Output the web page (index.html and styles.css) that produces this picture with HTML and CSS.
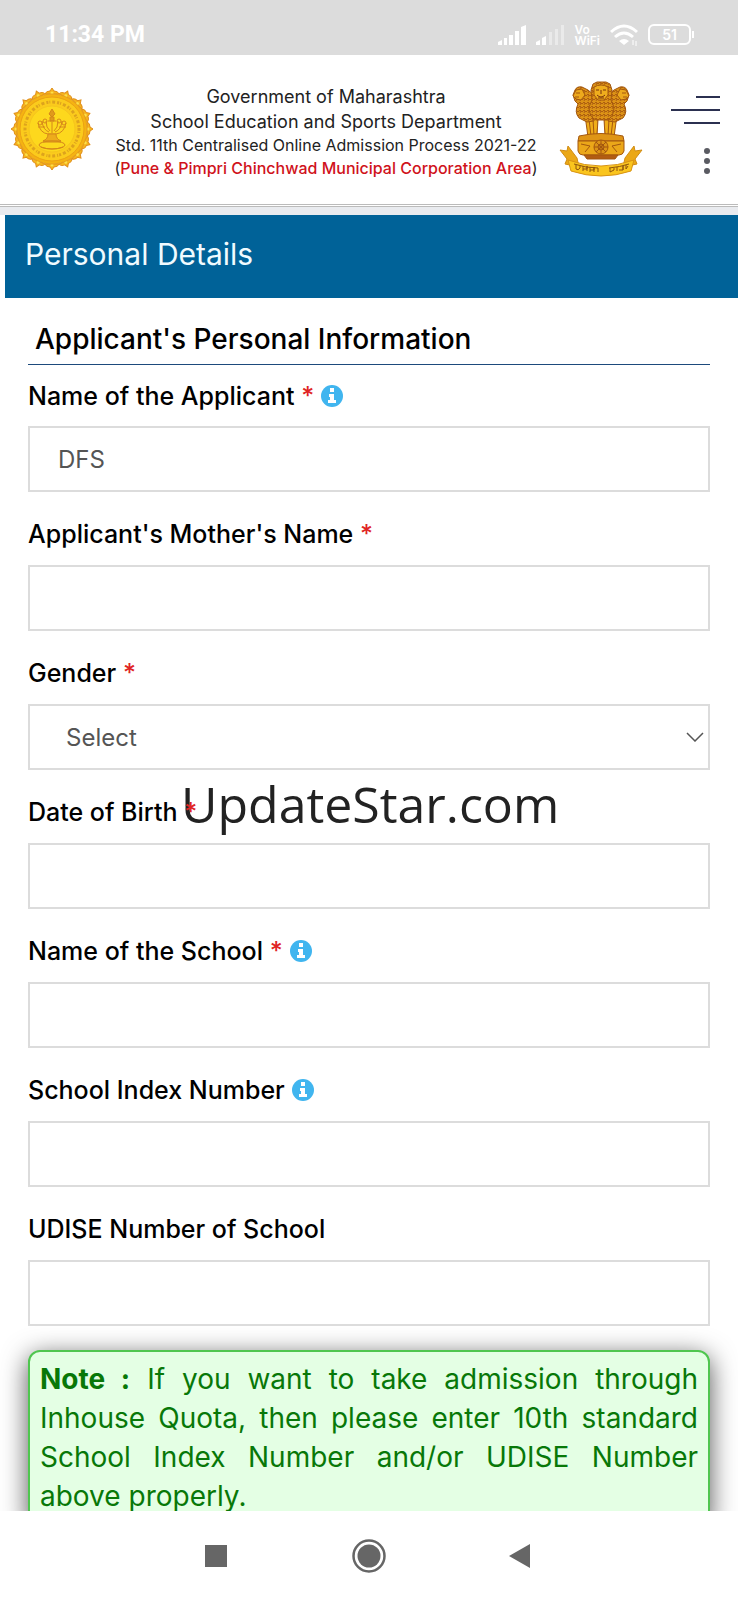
FILE: index.html
```html
<!DOCTYPE html>
<html lang="en">
<head>
    <meta charset="UTF-8">
    <meta name="viewport" content="width=device-width, initial-scale=1.0">
    <title>Personal Details</title>
    <link rel="stylesheet" href="styles.css">
</head>
<body>
    <!-- Status bar -->
    <div class="status-bar">
        <span class="clock">11:34 PM</span>
        <div class="status-icons">
            <svg width="28" height="20" viewBox="0 0 28 20" fill="#fff">
                <path d="M0 20v-3l4-2v5zM6 13h3v7H6zM11 10h4v10h-4zM17 6h4v14h-4zM23 2l5-2v20h-5z"/>
            </svg>
            <svg width="28" height="20" viewBox="0 0 28 20" fill="#fff">
                <path d="M0 20v-3l4-2v5zM6 13l4-2v9H6z"/>
                <path opacity=".4" d="M13 7h3v13h-3zM19 4h3v16h-3zM25 0h3v20h-3z"/>
            </svg>
            <span class="vowifi"><span>Vo</span><span>WiFi</span></span>
            <svg width="28" height="22" viewBox="0 0 28 22" fill="none" stroke="#fff" stroke-width="3">
                <path d="M1 8Q14-4 27 8M5 13q9-8 18 0"/>
                <path d="M9 17q5-4 10 0l-5 4z" fill="#fff" stroke="none"/>
                <path d="M23 16v5M26 17v5" stroke-width="1"/>
            </svg>
            <span class="battery">51</span>
        </div>
    </div>

    <!-- Header -->
    <header class="site-header">
        <svg class="seal" width="82" height="84" viewBox="-41 -42 82 84">
            <defs>
                <g id="petal">
                    <path d="M-7-35Q-6-38-2-38L0-41l2 3q4 0 5 3z" fill="#f6b51d" stroke="#e08f1c"/>
                    <circle cy="-36" r="1.5" fill="#fbe04a"/>
                </g>
                <g id="petals">
                    <use href="#petal"/>
                    <use href="#petal" transform="rotate(22.5)"/>
                    <use href="#petal" transform="rotate(45)"/>
                    <use href="#petal" transform="rotate(67.5)"/>
                </g>
            </defs>
            <use href="#petals"/>
            <use href="#petals" transform="rotate(90)"/>
            <use href="#petals" transform="rotate(180)"/>
            <use href="#petals" transform="rotate(270)"/>
            <circle r="35" fill="#f5b312" stroke="#e9a01a"/>
            <circle r="32" fill="#fbcb1c" stroke="#eba115"/>
            <circle r="27" fill="none" stroke="#dda31d" stroke-width="3" stroke-dasharray="2 1 1 2 3 2"/>
            <circle r="23" fill="#fdd81d" stroke="#f5c51c"/>
            <g fill="none" stroke="#d5861a">
                <path d="M0-20l3 5-3 3-3-3zM-2-12h4v4h-4zM-4-8h8" fill="#e09a1b"/>
                <path d="M-14-6q2 10 10 11h8q8-1 10-11M-10-8q1 9 7 11M10-8Q9 1 3 3M0-7v11M-6-8q0 7 4 10M6-8q0 7-4 10M-14-2h7M7-2h7"/>
                <circle cx="-12" cy="-6" r="2"/><circle cx="12" cy="-6" r="2"/>
                <circle cx="-7" cy="-8" r="2"/><circle cx="7" cy="-8" r="2"/>
                <path d="M-4 5q0 5-5 7h18q-5-2-5-7z" fill="#edac1b"/>
                <ellipse cy="16" rx="13" ry="4"/>
                <path d="M-9 13H9M-11 18q11 4 22 0"/>
            </g>
        </svg>

        <div class="header-text">
            <p>Government of Maharashtra</p>
            <p>School Education and Sports Department</p>
            <p class="small">Std. 11th Centralised Online Admission Process 2021-22</p>
            <p class="small">(<span class="area">Pune &amp; Pimpri Chinchwad Municipal Corporation Area</span>)</p>
        </div>

        <svg class="emblem" width="84" height="96" viewBox="0 0 84 96">
            <defs>
                <pattern id="mane" width="4" height="4" patternUnits="userSpaceOnUse">
                    <rect width="4" height="4" fill="#dc9216"/>
                    <path d="M0 2q1-2 2 0t2 0M1 4l1-2" fill="none" stroke="#ad5f10"/>
                </pattern>
            </defs>
            <g stroke="#a3570e" stroke-linejoin="round">
                <!-- legs -->
                <path d="M26 34l3 22h9l1-18h6l1 18h9l3-22z" fill="#f0ad19"/>
                <path d="M39 38h6l1 17h-8z" fill="#fff"/>
                <path d="M30 38l2 17M34 38l1 17M50 38l-1 17M54 38l-2 17M27 55h11M46 55h11" fill="none"/>
                <!-- side lions -->
                <path d="M23 6q-5-1-7 3l-2 5 2 6 3 3q-4 8 1 14l8 4 7-1V14l-6-5z" fill="url(#mane)"/>
                <path d="M61 6q5-1 7 3l2 5-2 6-3 3q4 8-1 14l-8 4-7-1V14l6-5z" fill="url(#mane)"/>
                <path d="M17 9l6-1 3 6-4 5-5-1-3-3zM67 9l-6-1-3 6 4 5 5-1 3-3z" fill="#eda91c"/>
                <path d="M17 12h4M16 16h4M67 12h-4M68 16h-4" fill="none"/>
                <!-- front lion -->
                <path d="M34 3l4-2h9l4 2 2 6-1 10 3 7q0 10-7 13H37q-7-3-7-13l3-7-1-10z" fill="url(#mane)"/>
                <path d="M35 6q7-4 14 0v8l-4 5h-6l-4-5z" fill="#efad1d"/>
                <path d="M37 9h3M44 9h3M42 9v4M38 14q4 4 8 0M39 17h6" fill="none" stroke="#79330c"/>
                <!-- abacus -->
                <path d="M20 55q22-5 44 0l1 5H19z" fill="#df9516"/>
                <path d="M19 60h46v10q-1 4-5 4H24q-4 0-5-4z" fill="#eba719"/>
                <circle cx="42" cy="66" r="7" fill="#dc9317"/>
                <circle cx="42" cy="66" r="3" fill="none"/>
                <path d="M42 59v14M35 66h14M37 61l10 10M47 61L37 71M22 63l9 2-5 6M62 63l-9 2 5 6" fill="none"/>
                <path d="M25 74h34l-3 4H28z" fill="#b25c12"/>
            </g>
            <!-- ribbon -->
            <path d="M1 69l7 1 1-5 9 12 2 9-14-3 2-5zM83 69l-7 1-1-5-9 12-2 9 14-3-2-5z" fill="#eba817" stroke="#d18c12"/>
            <path d="M9 79q33 12 66 0l-3 11q-30 10-60 0z" fill="#fac51e" stroke="#d89314"/>
            <path d="M15 83q12 4 24 4M50 87q11-1 20-4" fill="none" stroke="#8e530d"/>
            <path d="M17 84v4q2 2 4-1v-2M24 85v5M24 88h4v-3v5M31 86v5M31 89h4v-3v5M39 87v4M51 87v4l4-2v-2M58 86v4M60 89h4v-4v4M67 84v4l2-3" fill="none" stroke="#8e530d"/>
        </svg>

        <div class="header-actions">
            <button type="button" class="menu-btn" aria-label="Open menu">
                <span></span><span></span><span></span>
            </button>
            <button type="button" class="more-btn" aria-label="More options">
                <span></span><span></span><span></span>
            </button>
        </div>
    </header>

    <main>
        <h1>Personal Details</h1>

        <form class="details-form">
            <h2>Applicant's Personal Information</h2>

            <div class="field">
                <div class="field-label">
                    <label for="applicantName">Name of the Applicant <span class="required">*</span></label>
                    <svg class="info" width="22" height="22" viewBox="0 0 22 22">
                        <circle cx="11" cy="11" r="11" fill="#40b5ef"/>
                        <path d="M9 3h4v4H9zM8 9h5v6h2v3H7v-3h2v-3H8z" fill="#fff"/>
                    </svg>
                </div>
                <input type="text" id="applicantName" value="DFS">
            </div>

            <div class="field">
                <div class="field-label">
                    <label for="motherName">Applicant's Mother's Name <span class="required">*</span></label>
                </div>
                <input type="text" id="motherName">
            </div>

            <div class="field">
                <div class="field-label">
                    <label for="gender">Gender <span class="required">*</span></label>
                </div>
                <div class="select-wrap">
                    <select id="gender">
                        <option>Select</option>
                        <option>Male</option>
                        <option>Female</option>
                        <option>Transgender</option>
                    </select>
                    <svg class="chevron" width="18" height="10" viewBox="0 0 18 10" fill="none" stroke="#555" stroke-width="1.5">
                        <path d="M1 1l8 8 8-8"/>
                    </svg>
                </div>
            </div>

            <div class="field">
                <div class="watermark">UpdateStar.com</div>
                <div class="field-label">
                    <label for="birthDate">Date of Birth <span class="required">*</span></label>
                </div>
                <input type="text" id="birthDate">
            </div>

            <div class="field">
                <div class="field-label">
                    <label for="schoolName">Name of the School <span class="required">*</span></label>
                    <svg class="info" width="22" height="22" viewBox="0 0 22 22">
                        <circle cx="11" cy="11" r="11" fill="#40b5ef"/>
                        <path d="M9 3h4v4H9zM8 9h5v6h2v3H7v-3h2v-3H8z" fill="#fff"/>
                    </svg>
                </div>
                <input type="text" id="schoolName">
            </div>

            <div class="field">
                <div class="field-label">
                    <label for="schoolIndex">School Index Number</label>
                    <svg class="info" width="22" height="22" viewBox="0 0 22 22">
                        <circle cx="11" cy="11" r="11" fill="#40b5ef"/>
                        <path d="M9 3h4v4H9zM8 9h5v6h2v3H7v-3h2v-3H8z" fill="#fff"/>
                    </svg>
                </div>
                <input type="text" id="schoolIndex">
            </div>

            <div class="field">
                <div class="field-label">
                    <label for="udise">UDISE Number of School</label>
                </div>
                <input type="text" id="udise">
            </div>

            <p class="note"><b>Note :</b> If you want to take admission through Inhouse Quota, then please enter 10th standard School Index Number and/or UDISE Number above properly.</p>
        </form>
    </main>

    <!-- Phone navigation -->
    <nav class="phone-nav">
        <button type="button" aria-label="Recent apps">
            <svg width="34" height="34" viewBox="0 0 34 34" fill="#666"><path d="M6 6h22v22H6z"/></svg>
        </button>
        <button type="button" aria-label="Home">
            <svg width="34" height="34" viewBox="0 0 34 34" fill="#666">
                <circle cx="17" cy="17" r="15.5" fill="none" stroke="#666" stroke-width="2.5"/>
                <circle cx="17" cy="17" r="11.5"/>
            </svg>
        </button>
        <button type="button" aria-label="Back">
            <svg width="34" height="34" viewBox="0 0 34 34" fill="#666"><path d="M4 17L25 5v24z"/></svg>
        </button>
    </nav>
</body>
</html>
```
FILE: styles.css
```css
* {
    box-sizing: border-box;
}
body {
    margin: 0;
    height: 100vh;
    display: flex;
    flex-direction: column;
    font-family: Inter, "Open Sans", sans-serif;
    background-color: #fff;
    color: #000;
}
button {
    padding: 0;
    border: none;
    background: none;
    cursor: pointer;
}
svg {
    display: block;
}

/* Status bar */
.status-bar {
    flex: none;
    display: flex;
    justify-content: space-between;
    align-items: center;
    height: 55px;
    padding: 14px 47px 0 45px;
    background-color: #dcdcdc;
    color: #fff;
}
.clock {
    font-family: Roboto, sans-serif;
    font-size: 23px;
    font-weight: 700;
}
.status-icons {
    display: flex;
    align-items: center;
    gap: 10px;
}
.vowifi {
    display: flex;
    flex-direction: column;
    font-size: 12px;
    font-weight: 600;
    line-height: 11px;
}
.battery {
    position: relative;
    width: 43px;
    height: 21px;
    border: 2px solid #fff;
    border-radius: 6px;
    font-size: 14px;
    font-weight: 600;
    line-height: 17px;
    text-align: center;
}
.battery::after {
    content: "";
    position: absolute;
    top: 5px;
    right: -5px;
    width: 2px;
    height: 7px;
    background-color: #fff;
}

/* Header */
.site-header {
    flex: none;
    display: flex;
    align-items: center;
    height: 152px;
    padding: 0 18px 2px 11px;
    border-bottom: 3px double #bbb;
}
.header-text {
    flex: 1;
    padding-top: 6px;
    text-align: center;
    color: #222;
    white-space: nowrap;
}
.header-text p {
    margin: 0;
    font-size: 18px;
    line-height: 25px;
}
.header-text p.small {
    font-size: 16px;
    line-height: 23px;
}
.area {
    color: #d0121b;
    font-weight: 500;
}
.header-actions {
    display: flex;
    flex-direction: column;
    align-items: flex-end;
    gap: 24px;
    margin-left: 28px;
    padding-top: 13px;
}
.menu-btn {
    display: flex;
    flex-direction: column;
    align-items: flex-end;
    gap: 11px;
    width: 49px;
}
.menu-btn span {
    width: 24px;
    height: 2px;
    background-color: #2b3050;
}
.menu-btn span:nth-child(2) {
    width: 49px;
}
.menu-btn span:nth-child(3) {
    width: 36px;
}
.more-btn {
    display: flex;
    flex-direction: column;
    gap: 4px;
    margin-right: 10px;
}
.more-btn span {
    width: 6px;
    height: 6px;
    border-radius: 50%;
    background-color: #5a5b62;
}

/* Form */
main {
    flex: 1;
    min-height: 0;
    overflow-y: auto;
    scrollbar-width: none;
    border-top: 8px solid #e9ebef;
}
h1 {
    margin: 0 0 0 5px;
    padding: 0 20px 4px;
    background-color: #006298;
    color: #f0fbff;
    font-size: 30px;
    font-weight: 400;
    line-height: 79px;
}
.details-form {
    padding: 16px 28px 28px;
}
h2 {
    margin: 0;
    padding: 0 7px;
    border-bottom: 1px solid #1d4a7c;
    font-size: 28px;
    font-weight: 500;
    line-height: 50px;
}
.field {
    position: relative;
}
.field-label {
    position: relative;
    display: flex;
    align-items: center;
    gap: 7px;
    height: 73px;
    padding-top: 10px;
    font-size: 25px;
    font-weight: 500;
}
.field:first-of-type .field-label {
    height: 61px;
    padding-top: 0;
}
.required {
    color: #e02424;
}
input, select {
    display: block;
    width: 100%;
    height: 66px;
    padding: 0 28px;
    border: 2px solid #dcdcdc;
    border-radius: 0;
    background-color: #fff;
    color: #555;
    font-family: inherit;
    font-size: 24px;
}
select {
    appearance: none;
    padding: 0 36px;
}
.select-wrap {
    position: relative;
}
.chevron {
    position: absolute;
    top: 28px;
    right: 6px;
    pointer-events: none;
}
.watermark {
    position: absolute;
    top: -1px;
    left: 153px;
    color: #222;
    font-family: "Open Sans", sans-serif;
    font-size: 50px;
    line-height: 70px;
    white-space: nowrap;
}
.note {
    margin: 24px 0 0;
    padding: 8px 10px;
    border: 2px solid #4fc64f;
    border-radius: 12px;
    background-color: #e4ffe4;
    box-shadow: 0 6px 26px #555;
    color: #087808;
    font-size: 28px;
    line-height: 39px;
    text-align: justify;
}
.note b {
    font-weight: 700;
}

/* Phone navigation */
.phone-nav {
    position: relative;
    flex: none;
    display: flex;
    justify-content: center;
    align-items: center;
    gap: 119px;
    height: 89px;
    background-color: #fff;
}
```
